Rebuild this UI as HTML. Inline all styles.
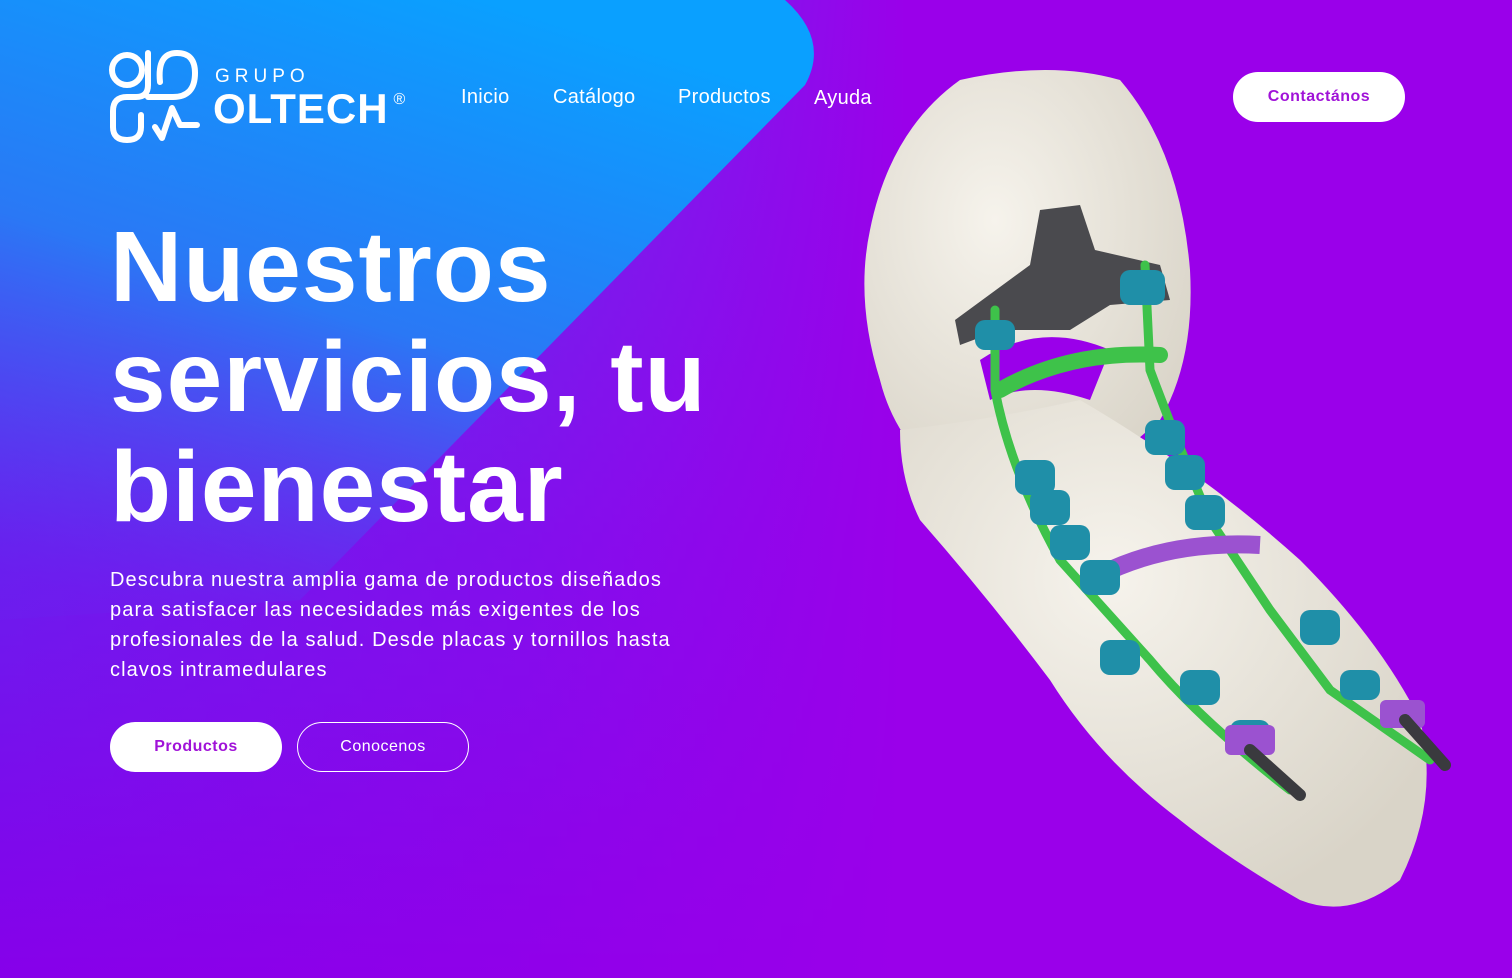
<!DOCTYPE html>
<html><head><meta charset="utf-8"><style>
*{margin:0;padding:0;box-sizing:border-box}
body{width:1512px;height:978px;overflow:hidden;font-family:"Liberation Sans",sans-serif;background:#9a00ea;position:relative;color:#fff}
.bg{position:absolute;left:0;top:0}
.nav a{position:absolute;top:86px;font-size:20px;color:#fff;text-decoration:none;letter-spacing:0.3px}
h1{position:absolute;left:110px;top:212px;font-size:100px;line-height:110px;font-weight:700;letter-spacing:1px}
p.d{position:absolute;left:110px;top:565px;width:700px;font-size:20px;line-height:30px;letter-spacing:1.1px}
.btn{position:absolute;height:50px;border-radius:25px;font-size:16px;display:flex;align-items:center;justify-content:center;letter-spacing:0.5px}
</style></head><body>
<svg class="bg" width="1512" height="978">
<defs>
<linearGradient id="lg" x1="0" y1="0" x2="0" y2="1">
<stop offset="0" stop-color="#3d5af2"/><stop offset="0.55" stop-color="#6a1eee"/><stop offset="1" stop-color="#8600ea"/></linearGradient>
<linearGradient id="hf" x1="0" y1="0" x2="1" y2="0">
<stop offset="0" stop-color="#9a00ea" stop-opacity="0"/><stop offset="0.35" stop-color="#9a00ea" stop-opacity="0.5"/><stop offset="0.6" stop-color="#9a00ea" stop-opacity="1"/></linearGradient>
<linearGradient id="tg" x1="0.6" y1="0" x2="0.2" y2="1">
<stop offset="0" stop-color="#0aa0ff"/><stop offset="0.5" stop-color="#2a78f5"/><stop offset="1" stop-color="#5a35f0" stop-opacity="0.1"/></linearGradient>
<radialGradient id="bone" cx="0.4" cy="0.35" r="0.7"><stop offset="0" stop-color="#f6f3ec"/><stop offset="1" stop-color="#d9d4c8"/></radialGradient>
</defs>
<rect width="1512" height="978" fill="url(#lg)"/>
<rect width="1512" height="978" fill="url(#hf)"/>
<path d="M0 0 L785 0 Q830 40 805 85 L300 600 L0 620Z" fill="url(#tg)"/>
<g>
<path d="M960 80 Q1050 60 1120 80 Q1180 150 1190 270 Q1195 360 1160 420 L1090 480 L980 500 Q900 460 880 380 Q855 300 870 230 Q890 130 960 80Z" fill="url(#bone)"/>
<path d="M900 430 Q990 420 1080 400 Q1200 470 1300 560 Q1380 640 1420 720 Q1440 800 1400 880 Q1350 920 1300 900 Q1230 860 1180 820 Q1100 760 1050 680 Q990 600 920 520 Q900 480 900 430Z" fill="url(#bone)"/>
<path d="M980 360 Q1040 320 1110 350 L1090 400 Q1030 380 990 400Z" fill="#9a00ea"/>
<path d="M1040 210 L1080 205 L1095 250 L1160 265 L1170 300 L1110 305 L1070 330 L1000 330 L960 345 L955 320 L1030 265Z" fill="#4a4a4e"/>
<g stroke="#3ec24a" stroke-width="9" fill="none" stroke-linecap="round">
<path d="M995 310 L995 390 Q1010 470 1060 560 L1150 660 Q1200 720 1290 790"/>
<path d="M1145 265 L1150 370 Q1180 450 1210 520 L1270 610 L1330 690 L1430 760"/>
<path d="M1000 390 Q1070 350 1160 355" stroke-width="16"/>
</g>
<path d="M1100 575 Q1170 540 1260 545" stroke="#9b52d0" stroke-width="18" fill="none"/>
<g fill="#1f8fa8">
<rect x="975" y="320" width="40" height="30" rx="10"/><rect x="1120" y="270" width="45" height="35" rx="10"/>
<rect x="1145" y="420" width="40" height="35" rx="10"/><rect x="1165" y="455" width="40" height="35" rx="10"/>
<rect x="1185" y="495" width="40" height="35" rx="10"/><rect x="1015" y="460" width="40" height="35" rx="10"/>
<rect x="1030" y="490" width="40" height="35" rx="10"/><rect x="1050" y="525" width="40" height="35" rx="10"/>
<rect x="1080" y="560" width="40" height="35" rx="10"/><rect x="1100" y="640" width="40" height="35" rx="10"/>
<rect x="1180" y="670" width="40" height="35" rx="10"/><rect x="1230" y="720" width="40" height="35" rx="10"/>
<rect x="1300" y="610" width="40" height="35" rx="10"/><rect x="1340" y="670" width="40" height="30" rx="10"/>
</g>
<rect x="1225" y="725" width="50" height="30" rx="6" fill="#9b52d0"/>
<rect x="1380" y="700" width="45" height="28" rx="6" fill="#9b52d0"/>
<path d="M1250 750 L1300 795 M1405 720 L1445 765" stroke="#3a3a3e" stroke-width="12" stroke-linecap="round"/>
</g>
</svg>
<svg style="position:absolute;left:105px;top:45px" width="100" height="105" viewBox="0 0 100 105" fill="none" stroke="#fff" stroke-width="6" stroke-linecap="round" stroke-linejoin="round">
<circle cx="22" cy="25" r="15"/>
<path d="M43 8 L43 40 Q43 52 31 52 L22 52 Q8 52 8 66 L8 82 Q8 95 22 95 Q36 95 36 82 L36 70"/>
<path d="M55 37 Q52 8 72 8 Q90 8 90 28 Q90 52 68 52 L43 52"/>
<path d="M50 82 L57 93 L67 63 L75 80 L92 80"/>
</svg>
<div style="position:absolute;left:215px;top:66px;font-size:19px;letter-spacing:5px;font-weight:400">GRUPO</div>
<div style="position:absolute;left:213px;top:85px;font-size:42px;font-weight:700;letter-spacing:1px">OLTECH<span style="font-size:16px;vertical-align:top;position:relative;top:6px;margin-left:5px;font-weight:400">®</span></div>
<div class="nav"><a style="left:461px">Inicio</a><a style="left:553px">Catálogo</a><a style="left:678px">Productos</a><a style="left:814px;top:87px">Ayuda</a></div>
<div class="btn" style="left:1233px;top:72px;width:172px;background:#fff;color:#a012d8;font-weight:700">Contactános</div>
<h1>Nuestros<br>servicios, tu<br>bienestar</h1>
<p class="d">Descubra nuestra amplia gama de productos diseñados<br>para satisfacer las necesidades más exigentes de los<br>profesionales de la salud. Desde placas y tornillos hasta<br>clavos intramedulares</p>
<div class="btn" style="left:110px;top:722px;width:172px;background:#fff;color:#a012d8;font-weight:700">Productos</div>
<div class="btn" style="left:297px;top:722px;width:172px;border:1.5px solid #fff;color:#fff">Conocenos</div>
</body></html>
